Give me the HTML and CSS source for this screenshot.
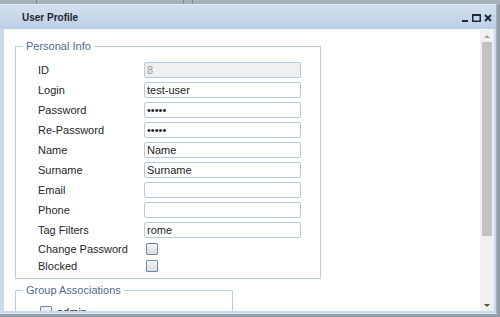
FILE: index.html
```html
<!DOCTYPE html>
<html lang="en">

<head>
    <meta charset="UTF-8">
    <title>User Profile</title>
    <link rel="stylesheet" href="styles.css">
</head>

<body>
    <!-- Desktop strip behind the window -->
    <div class="desk-bar">
        <span class="desk-cell cell-a"></span>
        <span class="desk-cell cell-b"></span>
        <span class="desk-cell cell-c"></span>
        <span class="desk-cell cell-d"></span>
    </div>

    <!-- Window -->
    <div class="window">
        <div class="window-header">
            <span class="window-title">User Profile</span>
            <div class="window-tools">
                <svg class="tool" width="8" height="8" viewBox="0 0 8 8">
                    <rect x="1" y="6" width="6" height="2" fill="#1d2a38" />
                </svg>
                <svg class="tool" width="9" height="8" viewBox="0 0 9 8">
                    <rect x="0.75" y="0.75" width="7.5" height="6.5" fill="none" stroke="#1d2a38" stroke-width="1.5" />
                    <rect x="0" y="0" width="9" height="2" fill="#1d2a38" />
                </svg>
                <svg class="tool" width="8" height="8" viewBox="0 0 8 8">
                    <path d="M1 1 L7 7 M7 1 L1 7" stroke="#1d2a38" stroke-width="2" />
                </svg>
            </div>
        </div>

        <div class="window-body">
            <div class="content">
                <fieldset class="group personal">
                    <legend>Personal Info</legend>
                    <div class="form-row">
                        <label>ID</label>
                        <input class="field disabled" type="text" value="8" disabled>
                    </div>
                    <div class="form-row">
                        <label>Login</label>
                        <input class="field" type="text" value="test-user">
                    </div>
                    <div class="form-row">
                        <label>Password</label>
                        <input class="field" type="password" value="abcde">
                    </div>
                    <div class="form-row">
                        <label>Re-Password</label>
                        <input class="field" type="password" value="abcde">
                    </div>
                    <div class="form-row">
                        <label>Name</label>
                        <input class="field" type="text" value="Name">
                    </div>
                    <div class="form-row">
                        <label>Surname</label>
                        <input class="field" type="text" value="Surname">
                    </div>
                    <div class="form-row">
                        <label>Email</label>
                        <input class="field" type="text" value="">
                    </div>
                    <div class="form-row">
                        <label>Phone</label>
                        <input class="field" type="text" value="">
                    </div>
                    <div class="form-row">
                        <label>Tag Filters</label>
                        <input class="field" type="text" value="rome">
                    </div>
                    <div class="form-row check-row">
                        <label>Change Password</label>
                        <span class="check-box"></span>
                    </div>
                    <div class="form-row check-row">
                        <label>Blocked</label>
                        <span class="check-box"></span>
                    </div>
                </fieldset>

                <fieldset class="group groups">
                    <legend>Group Associations</legend>
                    <div class="assoc-row">
                        <span class="check-box"></span>
                        <span class="assoc-name">admin</span>
                    </div>
                </fieldset>
            </div>

            <!-- Scrollbar -->
            <div class="scrollbar">
                <span class="arrow up"></span>
                <span class="thumb"></span>
                <span class="track"></span>
                <span class="arrow down"></span>
            </div>
        </div>
    </div>
</body>

</html>
```

FILE: styles.css
```css
/* General Reset */
* {
    margin: 0;
    padding: 0;
    box-sizing: border-box;
}

body {
    font-family: 'Liberation Sans', Arial, sans-serif;
    font-size: 11px;
    color: #222;
    background-color: #959fa9;
    width: 500px;
    height: 317px;
    overflow: hidden;
}

/* Strip behind the window */
.desk-bar {
    display: flex;
    height: 4px;
    background-color: #a8b2bb;
}

.desk-cell {
    height: 4px;
    border-right: 1px solid #7f8a95;
}

.cell-a {
    width: 37px;
}

.cell-b {
    width: 147px;
}

.cell-c {
    width: 9px;
}

.cell-d {
    flex: 1;
    border-right: none;
}

/* Window */
.window {
    width: 497px;
    height: 310px;
    background-color: #cad9eb;
    border-top: 1px solid #e4ecf6;
    border-right: 1px solid #9fb2c6;
    border-bottom: 1px solid #dfe7f0;
    padding: 0 2px 2px 4px;
    display: flex;
    flex-direction: column;
}

.window-header {
    height: 24px;
    display: flex;
    align-items: center;
    justify-content: space-between;
    background: linear-gradient(#d3e0f0, #bccfe6);
    margin-left: -4px;
    margin-right: -2px;
    padding: 0 4px 0 22px;
    flex-shrink: 0;
}

.window-title {
    font-weight: bold;
    font-size: 10px;
    color: #1f2630;
    margin-top: 1px;
}

.window-tools {
    display: flex;
    align-items: center;
    gap: 3px;
    margin-top: 2px;
}

.tool {
    display: block;
}

.window-body {
    flex: 1;
    display: flex;
    background-color: #fff;
    border-top: 1px solid #f3f6fa;
    overflow: hidden;
}

.content {
    flex: 1;
    padding: 10px 0 0 11px;
    overflow: hidden;
}

/* Fieldsets */
.group {
    border: 1px solid #b9cde3;
    padding: 7px 10px 4px 22px;
}

.group legend {
    padding: 0 3px;
    margin-left: -15px;
    font-size: 11px;
    line-height: 13px;
    color: #4d6a8c;
}

.personal {
    width: 306px;
}

.groups {
    width: 218px;
    margin-top: 5px;
    padding-top: 6px;
}

/* Form rows */
.form-row {
    display: flex;
    align-items: center;
    height: 20px;
}

.form-row label {
    width: 106px;
    flex-shrink: 0;
    color: #262626;
}

.field {
    width: 157px;
    height: 16px;
    border: 1px solid #b7cadf;
    border-radius: 2px;
    padding: 0 2px;
    font-family: 'Liberation Sans', Arial, sans-serif;
    font-size: 11px;
    color: #222;
    background-color: #fff;
    outline: none;
}

.field.disabled {
    background-color: #efefef;
    color: #999;
}

.check-row {
    height: 17px;
}

.check-box {
    display: inline-block;
    width: 12px;
    height: 12px;
    margin-left: 2px;
    border: 1px solid #6f8aa6;
    border-radius: 1px;
    background: linear-gradient(#f6f6f6, #dcdcdc);
}

.assoc-row {
    display: flex;
    align-items: center;
    gap: 5px;
    height: 17px;
}

.assoc-row .check-box {
    margin-left: 2px;
}

/* Scrollbar */
.scrollbar {
    width: 14px;
    display: flex;
    flex-direction: column;
    align-items: center;
    background-color: #f0f0f0;
    padding: 3px 0 2px;
}

.arrow {
    width: 0;
    height: 0;
    border-left: 3px solid transparent;
    border-right: 3px solid transparent;
    margin: 2px 0;
}

.arrow.up {
    border-bottom: 3px solid #a0a0a0;
}

.arrow.down {
    border-top: 3px solid #505050;
}

.thumb {
    width: 10px;
    height: 194px;
    margin-top: 2px;
    background-color: #c2c2c2;
}

.track {
    flex: 1;
}
```
